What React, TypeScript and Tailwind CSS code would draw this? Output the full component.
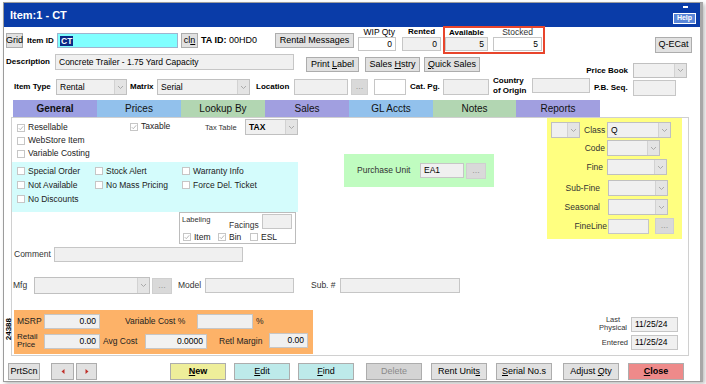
import React from 'react';

type P = { className?: string; children?: React.ReactNode };

// plain text box
const Field = ({ className = '', children }: P) => (
  <div className={`flex shrink-0 items-center overflow-hidden whitespace-nowrap border border-[#c6c6c6] px-[3px] text-[8.5px] text-black ${className}`}>
    {children}
  </div>
);

const Chev = () => (
  <svg width="7" height="5" viewBox="0 0 7 5">
    <path d="M1 1l2.5 2.5L6 1" fill="none" stroke="#a3a3a3" strokeWidth="0.9" />
  </svg>
);

// combo box with the little drop arrow
const Sel = ({ className = '', children }: P) => (
  <div className={`flex shrink-0 border border-[#c0c0c0] bg-[#f0f0f0] text-[8.5px] text-black ${className}`}>
    <div className="flex flex-1 items-center overflow-hidden whitespace-nowrap px-[3px]">{children}</div>
    <div className="flex w-[12px] items-center justify-center border-l border-[#d2d2d2] bg-[#e4e4e4]">
      <Chev />
    </div>
  </div>
);

const Btn = ({ className = '', children }: P) => (
  <button
    type="button"
    className={`flex shrink-0 items-center justify-center whitespace-nowrap border border-[#adadad] text-[9px] ${className}`}
  >
    {children}
  </button>
);

const Chk = ({ on, label, className = '' }: { on?: boolean; label: string; className?: string }) => (
  <div className={`flex items-center whitespace-nowrap text-[8.5px] text-[#222] ${className}`}>
    <span className="mr-[3px] flex h-[8px] w-[8px] shrink-0 items-center justify-center border border-[#c6c6c6] bg-white">
      {on && (
        <svg width="6" height="6" viewBox="0 0 6 6">
          <path d="M0.8 3.2l1.5 1.5L5.2 1.3" fill="none" stroke="#b0b0b0" strokeWidth="0.9" />
        </svg>
      )}
    </span>
    {label}
  </div>
);

const Dots = ({ className = '' }: P) => (
  <Btn className={`bg-[#d9d9d9] text-[#9a9a9a] border-[#cfcfcf] ${className}`}>...</Btn>
);

const tabs = [
  { name: 'General', cls: 'w-[84px] bg-[#9c9fe2] font-bold' },
  { name: 'Prices', cls: 'w-[84px] bg-[#92c1ec]' },
  { name: 'Lookup By', cls: 'w-[84px] bg-[#b2d6b2]' },
  { name: 'Sales', cls: 'w-[84px] bg-[#a19fe0]' },
  { name: 'GL Accts', cls: 'w-[84px] bg-[#92c1ec]' },
  { name: 'Notes', cls: 'w-[83px] bg-[#b2d6b2]' },
  { name: 'Reports', cls: 'w-[84px] bg-[#a19fe0]' },
];

const Tri = ({ dir }: { dir: 'l' | 'r' }) => (
  <svg width="4" height="5" viewBox="0 0 4 5">
    <path d={dir === 'l' ? 'M3.5 0L0.5 2.5L3.5 5z' : 'M0.5 0L3.5 2.5L0.5 5z'} fill="#c0302a" />
  </svg>
);

export default function App() {
  return (
    <div className="relative h-[384px] w-[706px] overflow-hidden bg-white font-['Liberation_Sans',Arial,sans-serif] text-[8px] text-black">
      <div className="relative ml-[3px] mt-[2px] flex h-[380px] w-[700px] flex-col border-y border-l border-r-[3px] border-[#9c9c9c] border-r-[#a8a8a8] bg-white shadow-[2px_2px_4px_rgba(0,0,0,0.25)]">
        {/* title bar */}
        <div className="flex h-[24px] shrink-0 items-start justify-between bg-[#0a3ca8] pl-[6px] pr-[4px]">
          <span className="mt-[4px] text-[11px] font-bold text-white">Item:1 - CT</span>
          <div className="flex flex-col items-end">
            <div className="mr-[8px] mt-[3px] h-[1.5px] w-[5px] bg-white" />
            <div className="mt-[5px] flex h-[11px] w-[23px] items-center justify-center border border-white bg-[#5a86d8] text-[7px] font-bold text-white">
              Help
            </div>
          </div>
        </div>

        {/* row 1 */}
        <div className="flex h-[27px] shrink-0 items-start">
          <Btn className="ml-[2px] mt-[6px] h-[15px] w-[17px] bg-[#e1e1e1] text-[8px]">Grid</Btn>
          <span className="ml-[4px] mt-[6px] flex h-[15px] w-[28px] items-center font-bold">Item ID</span>
          <div className="ml-[2px] mt-[6px] flex h-[15px] w-[121px] items-center border border-[#9fb4cf] bg-[#80ffff] px-[2px]">
            <span className="bg-[#0b2a86] px-[1px] text-[8.5px] font-bold leading-[10px] text-white">CT</span>
          </div>
          <Btn className="ml-[3px] mt-[6px] h-[15px] w-[17px] bg-[#e1e1e1]">
            cl<u>n</u>
          </Btn>
          <span className="ml-[3px] mt-[6px] flex h-[15px] w-[74px] items-center text-[9px]">
            <b>TA ID:</b>&nbsp;00HD0
          </span>
          <Btn className="mt-[6px] h-[15px] w-[79px] bg-[#e1e1e1]">Rental Messages</Btn>
          <div className="ml-[4px] flex w-[38px] flex-col">
            <span className="h-[10px] pr-[1px] text-right text-[8.5px] leading-[10px]">WIP Qty</span>
            <Field className="h-[14px] w-[38px] justify-end bg-white">0</Field>
          </div>
          <div className="ml-[6px] flex w-[39px] flex-col items-center">
            <span className="h-[10px] font-bold leading-[10px]">Rented</span>
            <Field className="h-[14px] w-[39px] justify-end bg-[#f0f0f0]">0</Field>
          </div>
          <div className="ml-[2px] mt-[-1px] flex h-[28px] w-[102px] border-2 border-[#e8452c]">
            <div className="flex w-[43px] flex-col items-center">
              <span className="h-[9px] font-bold leading-[9px]">Available</span>
              <Field className="h-[14px] w-[43px] justify-end bg-[#f0f0f0]">5</Field>
            </div>
            <div className="ml-[5px] flex w-[49px] flex-col items-center">
              <span className="h-[9px] text-[8.5px] leading-[9px] text-[#333]">Stocked</span>
              <Field className="h-[14px] w-[49px] justify-end bg-white">5</Field>
            </div>
          </div>
          <Btn className="ml-auto mr-[8px] mt-[10px] h-[16px] w-[37px] bg-[#e1e1e1]">Q-ECat</Btn>
        </div>

        {/* row 2 */}
        <div className="flex h-[25px] shrink-0 items-start">
          <span className="ml-[2px] flex h-[16px] w-[47px] items-center font-bold">Description</span>
          <Field className="ml-[2px] h-[16px] w-[239px] bg-[#f0f0f0]">Concrete Trailer - 1.75 Yard Capacity</Field>
          <Btn className="ml-[12px] mt-[3px] h-[15px] w-[53px] bg-[#e1e1e1]">
            Print&nbsp;<u>L</u>abel
          </Btn>
          <Btn className="ml-[6px] mt-[3px] h-[15px] w-[55px] bg-[#e1e1e1]">
            Sales&nbsp;<u>H</u>stry
          </Btn>
          <Btn className="ml-[4px] mt-[3px] h-[15px] w-[56px] bg-[#e1e1e1]">
            <u>Q</u>uick Sales
          </Btn>
          <div className="ml-auto mr-[13px] mt-[9px] flex items-center">
            <span className="mr-[5px] font-bold">Price Book</span>
            <Sel className="h-[15px] w-[54px]" />
          </div>
        </div>

        {/* row 3 */}
        <div className="flex h-[21px] shrink-0 items-start">
          <span className="ml-[10px] flex h-[16px] w-[40px] items-center font-bold">Item Type</span>
          <Sel className="ml-[2px] h-[16px] w-[71px]">Rental</Sel>
          <span className="ml-[3px] flex h-[16px] w-[25px] items-center font-bold">Matrix</span>
          <Sel className="ml-[2px] h-[16px] w-[93px]">Serial</Sel>
          <span className="ml-[6px] flex h-[16px] w-[36px] items-center font-bold">Location</span>
          <Field className="ml-[2px] h-[16px] w-[54px] bg-[#f0f0f0]" />
          <Dots className="ml-[3px] h-[16px] w-[17px]" />
          <Field className="ml-[6px] h-[16px] w-[32px] bg-white" />
          <span className="ml-[4px] flex h-[16px] w-[32px] items-center font-bold">Cat. Pg.</span>
          <Field className="ml-[1px] h-[16px] w-[46px] bg-[#f0f0f0]" />
          <span className="ml-[4px] mt-[-3px] w-[36px] font-bold leading-[10px]">
            Country
            <br />
            of Origin
          </span>
          <Field className="ml-[3px] mt-[-1px] h-[15px] w-[58px] bg-[#f0f0f0]" />
          <span className="ml-[4px] mt-[1px] flex h-[16px] w-[36px] items-center font-bold">P.B. Seq.</span>
          <Field className="ml-[3px] mt-[1px] h-[16px] w-[43px] bg-[#f0f0f0]" />
        </div>

        {/* tabs */}
        <div className="ml-[9px] flex h-[17px] shrink-0">
          {tabs.map((t) => (
            <div key={t.name} className={`flex items-center justify-center text-[10px] text-[#111] ${t.cls}`}>
              {t.name}
            </div>
          ))}
        </div>

        {/* tab panel */}
        <div className="ml-[7px] flex h-[239px] w-[678px] shrink-0 flex-col border border-[#d0d0d0] text-[8.5px] text-[#333]">
          <div className="flex h-[127px] shrink-0 items-start">
            <div className="flex w-[286px] flex-col">
              <div className="flex h-[44px] items-start">
                <div className="ml-[5px] flex w-[113px] flex-col pt-[3px]">
                  <Chk on label="Resellable" className="h-[13px]" />
                  <Chk label="WebStore Item" className="h-[13px]" />
                  <Chk label="Variable Costing" className="h-[13px]" />
                </div>
                <Chk on label="Taxable" className="mt-[2px] h-[13px] w-[75px]" />
                <span className="mt-[3px] flex h-[13px] w-[40px] items-center text-[7.5px]">Tax Table</span>
                <Sel className="mt-[1px] h-[16px] w-[53px]">
                  <span className="font-bold">TAX</span>
                </Sel>
              </div>
              <div className="grid h-[50px] grid-cols-[78px_87px_1fr] content-start bg-[#d4fcfc] pl-[5px] pt-[2px]">
                <Chk label="Special Order" className="h-[14px]" />
                <Chk label="Stock Alert" className="h-[14px]" />
                <Chk label="Warranty Info" className="h-[14px]" />
                <Chk label="Not Available" className="h-[14px]" />
                <Chk label="No Mass Pricing" className="h-[14px]" />
                <Chk label="Force Del. Ticket" className="h-[14px]" />
                <Chk label="No Discounts" className="h-[14px]" />
              </div>
              <div className="ml-[167px] flex h-[32px] w-[117px] flex-col border border-[#bcbcbc]">
                <div className="flex h-[18px] items-start">
                  <span className="w-[49px] pl-[2px] pt-[1px] text-[7.5px]">Labeling</span>
                  <span className="w-[33px] pt-[6px]">Facings</span>
                  <Field className="mt-[1px] h-[15px] w-[30px] bg-[#f0f0f0]" />
                </div>
                <div className="flex h-[12px] items-center pl-[3px]">
                  <Chk on label="Item" className="w-[35px]" />
                  <Chk on label="Bin" className="w-[32px]" />
                  <Chk label="ESL" />
                </div>
              </div>
            </div>

            <div className="ml-[46px] mt-[36px] flex h-[33px] w-[150px] items-center bg-[#c0fcc0]">
              <span className="ml-[13px] w-[60px]">Purchase Unit</span>
              <Field className="ml-[3px] h-[15px] w-[44px] items-start bg-[#f0f0f0]">EA1</Field>
              <Dots className="ml-[2px] h-[16px] w-[20px]" />
            </div>

            <div className="ml-[53px] flex h-[121px] w-[135px] flex-col bg-[#ffff80] pt-[4px]">
              <div className="flex h-[16px] items-center">
                <Sel className="ml-[4px] h-[16px] w-[29px]" />
                <span className="ml-[4px] w-[23px]">Class</span>
                <Sel className="h-[16px] w-[64px]">Q</Sel>
              </div>
              <div className="mt-[2px] flex h-[16px] items-center">
                <span className="w-[58px] text-right">Code</span>
                <Sel className="ml-[2px] h-[16px] w-[53px]" />
              </div>
              <div className="mt-[3px] flex h-[16px] items-center">
                <span className="w-[56px] text-right">Fine</span>
                <Sel className="ml-[4px] h-[16px] w-[60px]" />
              </div>
              <div className="mt-[5px] flex h-[16px] items-center">
                <span className="w-[53px] text-right">Sub-Fine</span>
                <Sel className="ml-[8px] h-[16px] w-[60px]" />
              </div>
              <div className="mt-[3px] flex h-[16px] items-center">
                <span className="w-[53px] text-right">Seasonal</span>
                <Sel className="ml-[8px] h-[16px] w-[60px]" />
              </div>
              <div className="mt-[3px] flex h-[16px] items-center">
                <span className="w-[60px] text-right">FineLine</span>
                <Field className="ml-[1px] h-[15px] w-[41px] bg-[#f0f0f0]" />
                <Dots className="ml-[6px] h-[16px] w-[19px]" />
              </div>
            </div>
          </div>

          <div className="mt-[1px] flex h-[16px] shrink-0 items-center">
            <span className="ml-[2px] w-[38px]">Comment</span>
            <Field className="ml-[2px] h-[15px] w-[189px] bg-[#f0f0f0]" />
          </div>

          <div className="mt-[15px] flex h-[17px] shrink-0 items-center">
            <span className="ml-[1px] w-[21px]">Mfg</span>
            <Sel className="h-[17px] w-[116px]" />
            <Dots className="ml-[2px] h-[16px] w-[20px]" />
            <span className="ml-[6px] w-[27px]">Model</span>
            <Field className="h-[15px] w-[89px] bg-[#f0f0f0]" />
            <span className="ml-[17px] w-[29px]">Sub. #</span>
            <Field className="h-[15px] w-[120px] bg-[#f0f0f0]" />
          </div>

          <div className="flex shrink-0 items-start">
            <div className="ml-[2px] mt-[16px] flex h-[44px] w-[299px] flex-col bg-[#fdb268] pt-[4px] text-[#222]">
              <div className="flex h-[15px] items-center">
                <span className="ml-[3px] w-[27px]">MSRP</span>
                <Field className="h-[15px] w-[56px] justify-end bg-[#f0f0f0]">0.00</Field>
                <span className="ml-[25px] w-[72px]">Variable Cost %</span>
                <Field className="h-[15px] w-[56px] bg-[#f0f0f0]" />
                <span className="ml-[3px]">%</span>
              </div>
              <div className="mt-[4px] flex h-[16px] items-center">
                <span className="ml-[3px] flex w-[27px] flex-col text-[8px] leading-[8px]">
                  <span>Retail</span>
                  <span>Price</span>
                </span>
                <Field className="h-[15px] w-[56px] justify-end bg-[#f0f0f0]">0.00</Field>
                <span className="ml-[3px] w-[42px]">Avg Cost</span>
                <Field className="h-[15px] w-[62px] justify-end border-[#a9b8cc] bg-[#f2f2f2]">0.0000</Field>
                <span className="ml-[12px] w-[50px]">Retl Margin</span>
                <Field className="mt-[-2px] h-[15px] w-[39px] justify-end bg-[#f0f0f0]">0.00</Field>
              </div>
            </div>

            <div className="ml-auto mr-[10px] mt-[22px] flex flex-col items-end">
              <div className="flex h-[16px] items-center">
                <span className="flex flex-col items-center text-[7.5px] leading-[8px]">
                  <span>Last</span>
                  <span>Physical</span>
                </span>
                <Field className="ml-[4px] h-[15px] w-[47px] bg-[#f0f0f0]">11/25/24</Field>
              </div>
              <div className="mt-[3px] flex h-[15px] items-center">
                <span className="text-[7.5px]">Entered</span>
                <Field className="ml-[3px] h-[15px] w-[47px] bg-[#f0f0f0]">11/25/24</Field>
              </div>
            </div>
          </div>
        </div>

        {/* button bar */}
        <div className="mt-[7px] flex h-[17px] shrink-0 items-center">
          <Btn className="ml-[4px] h-[17px] w-[32px] bg-[#e1e1e1]">PrtScn</Btn>
          <Btn className="ml-[11px] h-[17px] w-[23px] bg-[#e1e1e1]">
            <Tri dir="l" />
          </Btn>
          <Btn className="ml-[2px] h-[17px] w-[21px] bg-[#e1e1e1]">
            <Tri dir="r" />
          </Btn>
          <Btn className="ml-[73px] h-[17px] w-[56px] bg-[#eeee9a] font-bold">
            <u>N</u>ew
          </Btn>
          <Btn className="ml-[8px] h-[17px] w-[56px] bg-[#bdeaea]">
            <u>E</u>dit
          </Btn>
          <Btn className="ml-[8px] h-[17px] w-[56px] bg-[#bdeaea]">
            <u>F</u>ind
          </Btn>
          <Btn className="ml-[12px] h-[17px] w-[56px] bg-[#d4d4d4] text-[#8a8a8a]">Delete</Btn>
          <Btn className="ml-[9px] h-[17px] w-[56px] bg-[#e1e1e1]">
            Rent Unit<u>s</u>
          </Btn>
          <Btn className="ml-[9px] h-[17px] w-[56px] bg-[#e1e1e1]">
            <u>S</u>erial No.s
          </Btn>
          <Btn className="ml-[11px] h-[17px] w-[56px] bg-[#e1e1e1]">
            Adjust&nbsp;<u>Q</u>ty
          </Btn>
          <Btn className="ml-[9px] h-[17px] w-[56px] bg-[#ee8a8a] font-bold">
            <u>C</u>lose
          </Btn>
        </div>

        {/* record number, sits over the left edge */}
        <span className="absolute left-[-1px] top-[315px] rotate-180 text-[8px] font-bold [writing-mode:vertical-rl]">
          24388
        </span>
      </div>
    </div>
  );
}
